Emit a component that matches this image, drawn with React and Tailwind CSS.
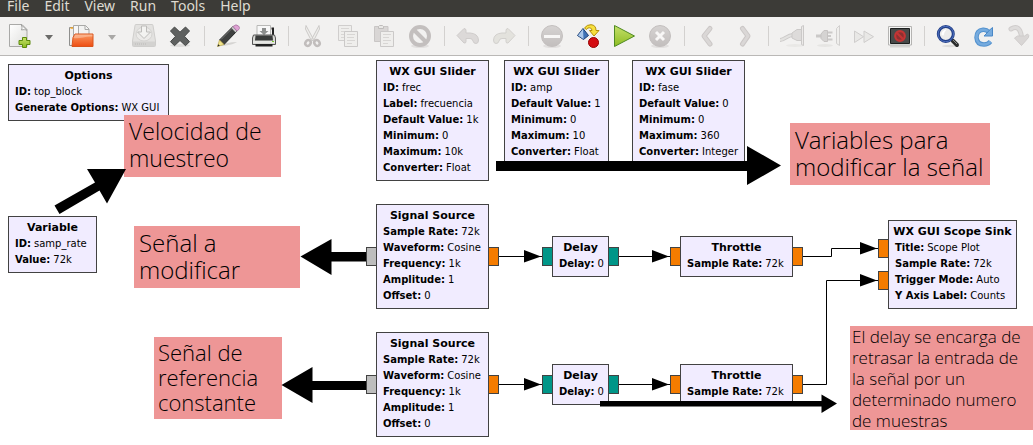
import React from "react";

const MENUS = ["File", "Edit", "View", "Run", "Tools", "Help"];

function Icon({ children }) {
  return (
    <svg viewBox="0 0 24 24" className="h-6 w-6 overflow-visible" fill="none" aria-hidden="true">
      {children}
    </svg>
  );
}

const icons = {
  new: (
    <Icon>
      <path d="M2.5.5H15l5 5V22.5H2.5z" fill="url(#paper)" stroke="#a9a9a7" />
      <path d="M14 .5c1.5 2 1 4 .5 5.5 2-.5 4-.5 5.5.3z" fill="#fff" stroke="#a0a09e" />
      <path d="M15.500 13.500h4v3h3.500v4h-3.500v3h-4v-3H12v-4h3.500z" fill="url(#green)" stroke="#5c8a0c" />
    </Icon>
  ),
  open: (
    <Icon>
      <path d="M-.5 3.500h6v18h-6z" fill="#f0efed" stroke="#8f8f8d" />
      <path d="M.5 4h4" stroke="#f5a623" strokeWidth="1.500" />
      <path d="M3.500 1.500h7l3 3v9h-10z" fill="#f7f7f7" stroke="#a9a9a7" />
      <path d="M8.500 1.500h7l3.500 3.500v8H8.500z" fill="#f3f3f2" stroke="#a9a9a7" />
      <path d="M15 1.500v4h4" stroke="#a9a9a7" />
      <path d="M3 13.500l2-3.500h18v12.500H2z" fill="url(#orange)" stroke="#d9541c" />
      <path d="M3.500 14c6 1 12-2 19-1.500V10.500H5z" fill="#fff" opacity=".3" />
    </Icon>
  ),
  save: (
    <Icon>
      <path d="M3 1.500Q3 .5 4 .5h16q1 0 1 1l2.500 15.500v4.500q0 1-1 1h-21q-1 0-1-1V17z" fill="#e3e2e0" stroke="#cfcecc" />
      <path d="M1 17.500h22v4.500H1z" fill="#d3d2d0" />
      <ellipse cx="12" cy="10" rx="8" ry="7" fill="#ecebe9" stroke="#d4d3d1" />
      <path d="M9.500 2h5v6h4L12 14.500 5.500 8h4z" fill="#f3f3f1" stroke="#bdbcba" />
      <path d="M3 20h12" stroke="#bbbab8" strokeDasharray="1 1" />
    </Icon>
  ),
  close: (
    <Icon>
      <ellipse cx="12" cy="21.500" rx="10" ry="1.500" fill="#dddcda" />
      <path d="M6.500 3L12 8.200 17.500 3 21.500 7 16.500 12.300 21.500 17.700 17.500 21.700 12 16.500 6.500 21.700 2.500 17.700 7.500 12.300 2.500 7z" fill="#5f6160" stroke="#454746" strokeLinejoin="round" />
    </Icon>
  ),
  edit: (
    <Icon>
      <path d="M3 22c6-3 11-4 18-4-3 2-10 4-18 4z" fill="#d5d4d2" />
      <path d="M17 2.500l4 4.500L8 20.500 3.500 16z" fill="#3f4140" stroke="#252726" />
      <path d="M16.500 4L5 15.500" stroke="#777" />
      <path d="M3.500 16L8 20.500 1.500 22.500z" fill="#f1e38b" stroke="#b9a84a" strokeWidth=".7" />
      <path d="M1.500 22.500l.8-2.300 1.500 1.500z" fill="#222" />
      <path d="M15.500 4L17 2.500l4 4.500-1.500 1.500z" fill="#c9c9c9" />
      <path d="M17 2.500Q20-.5 22.500 2T21 7z" fill="#dfa2d4" stroke="#a774a0" strokeWidth=".8" />
    </Icon>
  ),
  print: (
    <Icon>
      <path d="M19.500 4.500h1.500V12" stroke="#222" strokeWidth="2" />
      <path d="M5 1.500h13.500V14H5z" fill="#f8f8f8" stroke="#b9b9b7" />
      <path d="M10 4h4v3h2.500L12 11 7.500 7H10z" fill="#8d8f8e" />
      <path d="M1.500 11h21l1 3v6.500H.5V14z" fill="#d8d9d5" stroke="#555" />
      <path d="M3.500 11.500h17l.5 5H3z" fill="#3a3c3b" />
      <path d="M3.500 20h17v2.500h-17z" fill="#222" />
      <path d="M1 18h22" stroke="#f5f5f3" />
      <path d="M20 17.500h2" stroke="#7bc62d" />
    </Icon>
  ),
  cut: (
    <Icon>
      <path d="M6 1.500l7.500 14-2 1.500L5.500 5zM19 1.500l-7.500 14 2 1.500 6-12z" fill="#eeedeb" stroke="#cccac8" />
      <ellipse cx="8" cy="19" rx="2.500" ry="3" transform="rotate(35 8 19)" stroke="#c1bdbc" strokeWidth="2.500" />
      <ellipse cx="17" cy="19" rx="2.500" ry="3" transform="rotate(-35 17 19)" stroke="#c1bdbc" strokeWidth="2.500" />
    </Icon>
  ),
  copy: (
    <Icon>
      <path d="M2.500 1.500h13v15h-13z" fill="#efeeec" stroke="#d0cecd" />
      <path d="M5 4.500h8M5 7.500h6M5 10.500h4M5 13.500h3" stroke="#d8d6d4" />
      <path d="M8.500 7.500h13v15h-13z" fill="#efeeec" stroke="#cbc9c8" />
      <path d="M11 10.500h8M11 13.500h7M11 16.500h8M11 19.500h5" stroke="#d8d6d4" />
    </Icon>
  ),
  paste: (
    <Icon>
      <path d="M2.500 2.500h13.500v15H2.500z" fill="#d9d6d5" stroke="#c9c6c5" />
      <path d="M6.500 4.500v-2l1-1h3l1 1v2z" fill="#e9e8e6" stroke="#bfbcbb" />
      <path d="M8.500 7.500h13v15h-13z" fill="#efeeec" stroke="#cbc9c8" />
      <path d="M11 10.500h8M11 13.500h6M11 16.500h8M11 19.500h5" stroke="#d8d6d4" />
    </Icon>
  ),
  ban: (
    <Icon>
      <ellipse cx="12" cy="22" rx="9" ry="2" fill="#e2e0df" />
      <circle cx="12" cy="12" r="9" stroke="#c3bfbe" strokeWidth="4" />
      <path d="M6 6l12 12" stroke="#c3bfbe" strokeWidth="4" />
    </Icon>
  ),
  undo: (
    <Icon>
      <path d="M1 11.500L8 4.500q2 0 2 2V9h4q8 .5 8.500 7 0 3.500-2.500 3.500t-3-2.500q-.5-2.500-3-2.500h-4v3q0 2-2 1.500z" fill="#dcd9d8" stroke="#cfcccb" strokeLinejoin="round" />
    </Icon>
  ),
  redo: (
    <Icon>
      <path d="M23 11.500L16 4.500q-2 0-2 2V9h-4Q2 9.500 1.500 16q0 3.500 2.500 3.500t3-2.500q.5-2.500 3-2.500h4v3q0 2 2 1.500z" fill="#e3e2dd" stroke="#d2d0cd" strokeLinejoin="round" />
    </Icon>
  ),
  disable: (
    <Icon>
      <ellipse cx="12" cy="22" rx="9" ry="2" fill="#e2e0df" />
      <circle cx="12" cy="12" r="10.500" fill="url(#disc)" stroke="#c3bfbe" />
      <path d="M4 12.500h16" stroke="#f8f7f6" strokeWidth="3" />
    </Icon>
  ),
  generate: (
    <Icon>
      <path d="M7 4.500l5.500 7-5 4-6-4z" fill="#3f72b5" stroke="#1d3f74" />
      <path d="M7 5l.5 10-5.500-3.500z" fill="#a9c7ea" />
      <path d="M8.500 4Q11 .5 15 .7q5 .3 5 5.800h3L18 12l-4.500-5.500H16q-.5-3.500-4-2.500-1 .5-1.500 1.500z" fill="#f7e03d" stroke="#b38f0a" />
      <circle cx="17.500" cy="18.500" r="5" fill="#d40d12" stroke="#960000" />
    </Icon>
  ),
  play: (
    <Icon>
      <path d="M2.500 1.500v21L22.500 12z" fill="url(#green)" stroke="#4f8a22" />
    </Icon>
  ),
  stop: (
    <Icon>
      <ellipse cx="12" cy="22" rx="9" ry="2" fill="#e2e0df" />
      <circle cx="12" cy="12" r="10.500" fill="url(#disc)" stroke="#c3bfbe" />
      <path d="M8 8l8 8M16 8l-8 8" stroke="#f8f7f6" strokeWidth="3" />
    </Icon>
  ),
  back: (
    <Icon>
      <path d="M14 4.500L8 12l6 8" stroke="#cbc7c6" strokeWidth="5" strokeLinecap="round" strokeLinejoin="round" />
      <path d="M14 4.500L8 12l6 8" stroke="#dad7d6" strokeWidth="3" strokeLinecap="round" strokeLinejoin="round" />
    </Icon>
  ),
  forward: (
    <Icon>
      <path d="M10.500 4.500L16 12l-5.500 8" stroke="#cbc7c6" strokeWidth="5" strokeLinecap="round" strokeLinejoin="round" />
      <path d="M10.500 4.500L16 12l-5.500 8" stroke="#dad7d6" strokeWidth="3" strokeLinecap="round" strokeLinejoin="round" />
    </Icon>
  ),
  connect: (
    <Icon>
      <ellipse cx="15" cy="21.500" rx="9" ry="1.500" fill="#e9e8e6" />
      <path d="M0 16c5 0 7-5 13-5" stroke="#cbc9c8" strokeWidth="4" />
      <path d="M0 16c5 0 7-5 13-5" stroke="#e3e2e0" strokeWidth="2" />
      <path d="M12 9l5-3.500h4.500v11H17l-5-2.500z" fill="#dddbda" stroke="#cbc9c8" />
      <path d="M21.500 2.500l2-1v20l-2-1z" fill="#eceae9" stroke="#cbc9c8" />
    </Icon>
  ),
  disconnect: (
    <Icon>
      <ellipse cx="9" cy="21.500" rx="8" ry="1.500" fill="#e6e5e3" />
      <path d="M0 12h6" stroke="#cbc9c8" strokeWidth="3" />
      <path d="M5 10l3-3.500h3.500v11H8l-3-3z" fill="#d5d3d2" stroke="#c6c3c2" />
      <path d="M12 8.500h4.500M12 12h3M12 15.500h4.500" stroke="#cbc9c8" strokeWidth="2" />
      <path d="M20.500 4.500l3-3v20l-3-2z" fill="#efeeec" stroke="#d2d0cf" />
    </Icon>
  ),
  fastForward: (
    <Icon>
      <path d="M2.500 7v11.500l9-5.800zM12 7v11.500l9.500-5.800z" fill="#e9e8e6" stroke="#cfcdcc" />
    </Icon>
  ),
  terminal: (
    <Icon>
      <path d="M2 22.500h20" stroke="#d5d4d2" strokeWidth="2" />
      <path d="M.5 2.500h23v18.500H.5z" fill="#f6f6f5" stroke="#b5b4b2" />
      <path d="M2.500 4.500h19v15h-19z" fill="#484a49" stroke="#1d1f1e" />
      <circle cx="12" cy="12" r="4.800" fill="#8c3030" stroke="#c43434" strokeWidth="2.200" />
      <path d="M9 9l6 6" stroke="#c43434" strokeWidth="2.200" />
    </Icon>
  ),
  search: (
    <Icon>
      <ellipse cx="14" cy="22" rx="8" ry="1.200" fill="#dddcda" />
      <path d="M16.500 16.500L21 21" stroke="#2c2e2d" strokeWidth="4" strokeLinecap="round" />
      <path d="M17 16l4 4" stroke="#8b8d8c" />
      <circle cx="9.800" cy="10" r="7.500" fill="#ececeb" stroke="#213f86" strokeWidth="3" />
      <circle cx="9.800" cy="10" r="7.700" stroke="#4f6fc0" />
      <path d="M5.500 11q0-5 5-5.500-2.500 2.500-3 6z" fill="#fff" />
    </Icon>
  ),
  refresh: (
    <Icon>
      <path d="M17 8.200Q14.500 5.500 11 5.800 4.500 6.500 4.500 13.500q.5 7 7.500 7 4 0 6.500-3" stroke="#5593cf" strokeWidth="4.500" />
      <path d="M17 8.200Q14.500 5.500 11 5.800 4.500 6.500 4.500 13.500q.5 7 7.500 7 4 0 6.500-3" stroke="#76abde" strokeWidth="2.500" />
      <path d="M20.500 3.500v8.500H12l3-3 2-2.500z" fill="#76abde" stroke="#4a88c7" />
    </Icon>
  ),
  down: (
    <Icon>
      <path d="M3 5q9-5 10.500 8" stroke="#cfcccb" strokeWidth="5" strokeLinecap="round" />
      <path d="M3 5q9-5 10.500 8" stroke="#dedcdb" strokeWidth="3" strokeLinecap="round" />
      <path d="M6.500 14l3-2h7l3-2q2 1 1 3.500L13.500 21.500z" fill="#d9d6d5" stroke="#cfcccb" strokeLinejoin="round" />
    </Icon>
  ),
};

function ToolButton({ label, icon }) {
  return (
    <button type="button" aria-label={label} className="flex h-9 w-9 shrink-0 items-center justify-center">
      {icons[icon]}
    </button>
  );
}

function SplitButton({ label, icon, arrow }) {
  return (
    <div className="flex w-[62px] shrink-0 items-center">
      <ToolButton label={label} icon={icon} />
      <button type="button" aria-label={label + " options"} className="flex h-9 w-6 items-center justify-center">
        <svg viewBox="0 0 8 5" className={"mt-[2px] h-[5px] w-2 " + arrow} aria-hidden="true">
          <path d="M0 0h8L4 5z" fill="currentColor" />
        </svg>
      </button>
    </div>
  );
}

function Separator() {
  return (
    <div className="flex w-3 shrink-0 justify-center">
      <div className="h-5 w-px bg-[#d3d1cf]" />
    </div>
  );
}

const TOOL_GROUPS = [
  [["Save", "save"], ["Close", "close"]],
  [["Edit properties", "edit"], ["Print", "print"]],
  [["Cut", "cut"], ["Copy", "copy"], ["Paste", "paste"], ["Delete", "ban"]],
  [["Undo", "undo"], ["Redo", "redo"]],
  [["Errors", "disable"], ["Generate", "generate"], ["Execute", "play"], ["Kill", "stop"]],
  [["Rotate left", "back"], ["Rotate right", "forward"]],
  [["Enable", "connect"], ["Disable", "disconnect"], ["Bypass", "fastForward"], ["Hide reports", "terminal"]],
  [["Find blocks", "search"], ["Reload blocks", "refresh"], ["Open hierarchy", "down"]],
];

const SIGNAL = [
  ["Sample Rate", "72k"],
  ["Waveform", "Cosine"],
  ["Frequency", "1k"],
  ["Amplitude", "1"],
  ["Offset", "0"],
];

const GRAY = "bg-[#bdbdbd]";
const ORANGE = "bg-[#f57c00]";
const TEAL = "bg-[#009688]";

const BLOCKS = [
  { title: "Options", place: "left-[8px] top-[8px] w-[161px]", params: [["ID", "top_block"], ["Generate Options", "WX GUI"]] },
  { title: "Variable", place: "left-[8px] top-[160px] w-[89px]", params: [["ID", "samp_rate"], ["Value", "72k"]] },
  {
    title: "WX GUI Slider",
    place: "left-[376px] top-[4px] w-[113px]",
    params: [["ID", "frec"], ["Label", "frecuencia"], ["Default Value", "1k"], ["Minimum", "0"], ["Maximum", "10k"], ["Converter", "Float"]],
  },
  {
    title: "WX GUI Slider",
    place: "left-[504px] top-[4px] w-[105px]",
    params: [["ID", "amp"], ["Default Value", "1"], ["Minimum", "0"], ["Maximum", "10"], ["Converter", "Float"]],
  },
  {
    title: "WX GUI Slider",
    place: "left-[632px] top-[4px] w-[113px]",
    params: [["ID", "fase"], ["Default Value", "0"], ["Minimum", "0"], ["Maximum", "360"], ["Converter", "Integer"]],
  },
  { title: "Signal Source", place: "left-[376px] top-[148px] w-[113px]", params: SIGNAL, ins: [GRAY], outs: [ORANGE] },
  { title: "Delay", place: "left-[552px] top-[180px] w-[57px]", params: [["Delay", "0"]], ins: [TEAL], outs: [TEAL] },
  { title: "Throttle", place: "left-[680px] top-[180px] w-[113px]", params: [["Sample Rate", "72k"]], ins: [ORANGE], outs: [ORANGE] },
  {
    title: "WX GUI Scope Sink",
    place: "left-[888px] top-[164px] w-[129px]",
    params: [["Title", "Scope Plot"], ["Sample Rate", "72k"], ["Trigger Mode", "Auto"], ["Y Axis Label", "Counts"]],
    ins: [ORANGE, ORANGE],
  },
  { title: "Signal Source", place: "left-[376px] top-[276px] w-[113px]", params: SIGNAL, ins: [GRAY], outs: [ORANGE] },
  { title: "Delay", place: "left-[552px] top-[308px] w-[57px]", params: [["Delay", "0"]], ins: [TEAL], outs: [TEAL] },
  { title: "Throttle", place: "left-[680px] top-[308px] w-[113px]", params: [["Sample Rate", "72k"]], ins: [ORANGE], outs: [ORANGE] },
];

function Ports({ colors, side }) {
  return (
    <div className={"absolute inset-y-0 flex flex-col justify-center gap-[13px] " + side}>
      {colors.map((color, i) => (
        <div key={i} className={"h-[19px] w-[11px] border border-[#424242] " + color} />
      ))}
    </div>
  );
}

function Block({ title, place, params, ins = [], outs = [] }) {
  return (
    <section className={"absolute border border-[#424242] bg-[#f1ecff] pt-[3px] pb-[4px] pl-[6px] " + place}>
      <Ports colors={ins} side="-left-[11px]" />
      <Ports colors={outs} side="-right-[11px]" />
      <h2 className="mr-[6px] flex h-4 justify-center text-[11px] leading-4 font-bold whitespace-nowrap">{title}</h2>
      <dl className="text-[10px] leading-4 whitespace-nowrap">
        {params.map(([name, value]) => (
          <div key={name} className="flex gap-[3px]">
            <dt className="font-bold">{name}:</dt>
            <dd>{value}</dd>
          </div>
        ))}
      </dl>
    </section>
  );
}

const NOTES = [
  { text: "Velocidad de muestreo", place: "left-[124px] top-[59px] w-[157px] h-[62px] pl-[5px] pt-[3px] text-[23px] leading-[27px]" },
  { text: "Señal a modificar", place: "left-[134px] top-[170px] w-[166px] h-[62px] pl-[5px] pr-[30px] pt-[3px] text-[24px] leading-[27px]" },
  { text: "Variables para modificar la señal", place: "left-[790px] top-[67px] w-[200px] h-[62px] pl-[5px] pt-[3px] text-[24px] leading-[27px]" },
  { text: "Señal de referencia constante", place: "left-[154px] top-[281px] w-[128px] h-[82px] pl-[4px] pt-[3px] text-[22px] leading-[25px]" },
  { text: "El delay se encarga de retrasar la entrada de la señal por un determinado numero de muestras", place: "left-[850px] top-[270px] w-[183px] h-[104px] pl-[2px] text-[17px] leading-[21px]" },
];

const WIRES = [
  "M499 200.500H542",
  "M619 200.500H670",
  "M803 200.500H831.500V192.500H878",
  "M499 328.500H542",
  "M619 328.500H670",
  "M803 328.500H826.500V224.500H878",
];

const HEADS = [
  "M524 194l17 6.500-17 6z",
  "M652 194l17 6.500-17 6z",
  "M860 186l17 6.500-17 6z",
  "M860 218l17 6.500-17 6z",
  "M524 322l17 6.500-17 6z",
  "M652 322l17 6.500-17 6z",
];

const POINTERS = [
  "M54.500 149.500L95 126.500 87 113H126L107 147.500 99.500 134.500 59.500 158z",
  "M496 105H747V90L781 109.500 747 129V115H496z",
  "M366 196H331.500V183L300.500 200.500 331.500 219V205.500H366z",
  "M366 325H312.500V311L281.500 329 312.500 347V334H366z",
  "M600 345H821.500V338.500L837 347.500 821.500 357V350.500H600z",
];

function Overlay({ children }) {
  return (
    <svg viewBox="0 0 1033 389" className="pointer-events-none absolute top-0 left-0 h-[389px] w-[1033px]" fill="none" aria-hidden="true">
      {children}
    </svg>
  );
}

export default function App() {
  return (
    <div className="flex min-h-screen flex-col bg-white text-black">
      <svg className="absolute h-0 w-0" aria-hidden="true">
        <defs>
          <linearGradient id="paper" x1="0" y1="0" x2="1" y2="1">
            <stop offset="0" stopColor="#fff" />
            <stop offset="1" stopColor="#dededc" />
          </linearGradient>
          <linearGradient id="green" x1="0" y1="0" x2="0" y2="1">
            <stop offset="0" stopColor="#c5e06a" />
            <stop offset="1" stopColor="#8dbc22" />
          </linearGradient>
          <linearGradient id="orange" x1="0" y1="0" x2="0" y2="1">
            <stop offset="0" stopColor="#fa9a62" />
            <stop offset="1" stopColor="#ee4d12" />
          </linearGradient>
          <linearGradient id="disc" x1="0" y1="0" x2="0" y2="1">
            <stop offset="0" stopColor="#d6d3d2" />
            <stop offset="1" stopColor="#c2bebd" />
          </linearGradient>
        </defs>
      </svg>
      <nav className="flex h-[17px] items-end gap-[15px] bg-[#3c3b37] pl-[7px] font-['Noto_Sans',sans-serif] text-[14px] leading-[22px] text-[#dfdbd2]">
        {MENUS.map((menu) => (
          <button key={menu} type="button">{menu}</button>
        ))}
      </nav>
      <div role="toolbar" aria-label="Main toolbar" className="flex h-[39px] items-center overflow-hidden border-b border-[#bab8b6] bg-[#f2f1f0] pl-px">
        <div className="flex shrink-0 gap-px">
          <SplitButton label="New" icon="new" arrow="text-[#6b6b69]" />
          <SplitButton label="Open" icon="open" arrow="text-[#a9a8a6]" />
        </div>
        {TOOL_GROUPS.map((group, i) => (
          <React.Fragment key={i}>
            {i > 0 && <Separator />}
            {group.map(([label, icon]) => (
              <ToolButton key={label} label={label} icon={icon} />
            ))}
          </React.Fragment>
        ))}
      </div>
      <main className="relative flex-1 overflow-hidden font-['DejaVu_Sans',sans-serif]">
        <Overlay>
          {WIRES.map((d) => <path key={d} d={d} stroke="#000" />)}
          {HEADS.map((d) => <path key={d} d={d} fill="#000" />)}
        </Overlay>
        {BLOCKS.map((block, i) => <Block key={i} {...block} />)}
        {NOTES.map((note) => (
          <p key={note.text} className={"absolute bg-[#ee9696] font-['Open_Sans',sans-serif] font-light text-black " + note.place}>
            {note.text}
          </p>
        ))}
        <Overlay>
          {POINTERS.map((d) => <path key={d} d={d} fill="#000" />)}
        </Overlay>
      </main>
    </div>
  );
}
